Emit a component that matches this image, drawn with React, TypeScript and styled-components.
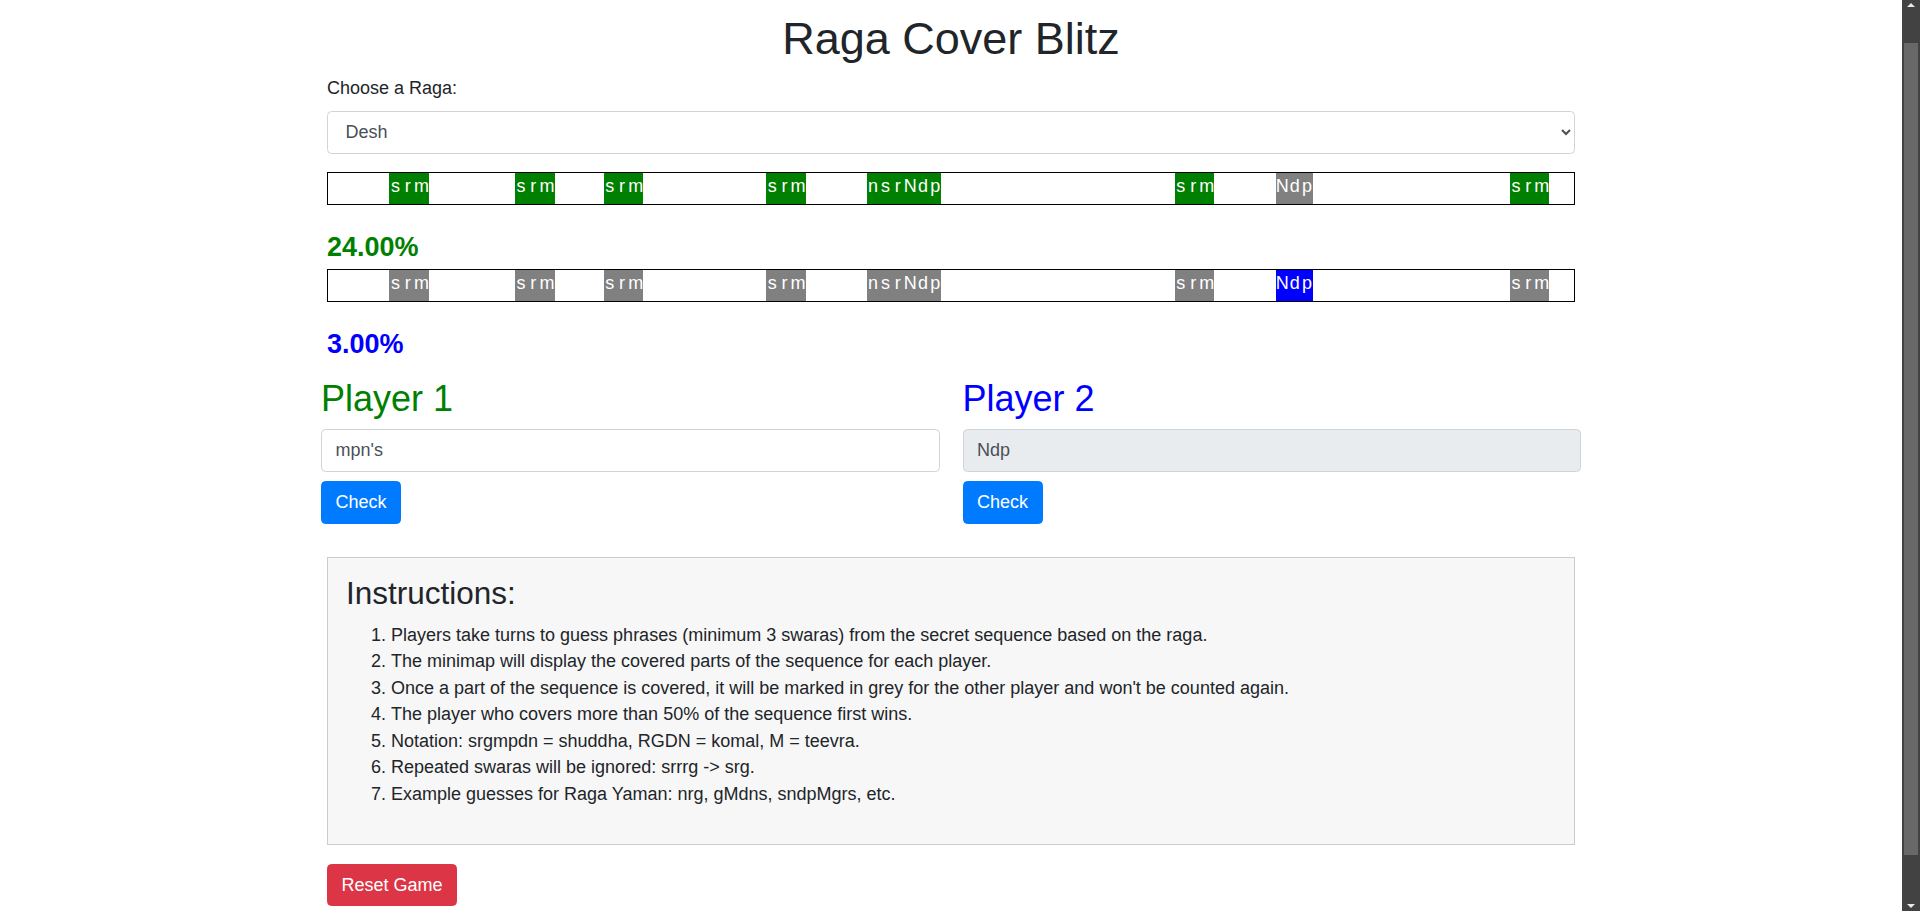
import {useMemo, useState} from 'react'
import styled, {createGlobalStyle} from 'styled-components'

// the secret sequence for Desh, one swara per cell (100 cells)
const SEQUENCE = [
  'gpdnd', 'srm', 'pgrgsnd', 'srm', 'gpdn', 'srm', 'pdnsrgrgsn', 'srm', 'pgrsn',
  'nsrNdp', 'gpdgrsnsrgpndpgrgsn', 'srm', 'pgdpn', 'Ndp', 'grgsnsrgpnsrgdps',
  'srm', 'pd',
].join('').split('')

type Range = [number, number]

const P1_COVERED: Range[] = [
  [5, 8], [15, 18], [22, 25], [35, 38], [43, 49], [68, 71], [95, 98],
]
const P2_COVERED: Range[] = [[76, 79]]

const PLAYER_COLORS = {1: 'green', 2: 'blue'} as const

type CellState = 'own' | 'other' | 'none'

const inRanges = (i: number, ranges: Range[]) =>
  ranges.some(([a, b]) => i >= a && i < b)

const coverage = (ranges: Range[]) =>
  (ranges.reduce((n, [a, b]) => n + b - a, 0) / SEQUENCE.length) * 100

const GlobalStyle = createGlobalStyle`
  body {
    margin: 0;
    background: #fff;
    color: #212529;
    font-family: "Liberation Sans", Arial, sans-serif;
    font-size: 18px;
    line-height: 1.5;
  }
  *, *::before, *::after {
    box-sizing: border-box;
  }
`

function App() {
  const [raga, setRaga] = useState('Desh')
  const [guess1, setGuess1] = useState("mpn's")

  const p1Percent = useMemo(() => coverage(P1_COVERED), [])
  const p2Percent = useMemo(() => coverage(P2_COVERED), [])

  const renderBar = (player: 1 | 2) => {
    const own = player === 1 ? P1_COVERED : P2_COVERED
    const other = player === 1 ? P2_COVERED : P1_COVERED
    return (
      <MiniMap>
        {SEQUENCE.map((s, i) => {
          const state: CellState = inRanges(i, own)
            ? 'own'
            : inRanges(i, other)
            ? 'other'
            : 'none'
          return (
            <Cell key={i} $state={state} $color={PLAYER_COLORS[player]}>
              {s}
            </Cell>
          )
        })}
      </MiniMap>
    )
  }

  return (
    <>
      <GlobalStyle />
      <Shell>
        <Page>
          <Container>
            <Title>Raga Cover Blitz</Title>
            <FormGroup>
              <Label htmlFor='raga'>Choose a Raga:</Label>
              <Select id='raga' value={raga} onChange={e => setRaga(e.target.value)}>
                <option>Yaman</option>
                <option>Desh</option>
                <option>Bhairav</option>
                <option>Bhoopali</option>
              </Select>
            </FormGroup>

            {renderBar(1)}
            <Percent $color={PLAYER_COLORS[1]}>{p1Percent.toFixed(2)}%</Percent>
            {renderBar(2)}
            <Percent $color={PLAYER_COLORS[2]}>{p2Percent.toFixed(2)}%</Percent>

            <PlayersRow>
              <PlayerCol>
                <PlayerName $color={PLAYER_COLORS[1]}>Player 1</PlayerName>
                <Input value={guess1} onChange={e => setGuess1(e.target.value)} />
                <Button $variant='primary'>Check</Button>
              </PlayerCol>
              <PlayerCol>
                <PlayerName $color={PLAYER_COLORS[2]}>Player 2</PlayerName>
                <Input value='Ndp' disabled readOnly />
                <Button $variant='primary'>Check</Button>
              </PlayerCol>
            </PlayersRow>

            <Instructions>
              <InstructionsTitle>Instructions:</InstructionsTitle>
              <Steps>
                <li>Players take turns to guess phrases (minimum 3 swaras) from the secret sequence based on the raga.</li>
                <li>The minimap will display the covered parts of the sequence for each player.</li>
                <li>Once a part of the sequence is covered, it will be marked in grey for the other player and won't be counted again.</li>
                <li>The player who covers more than 50% of the sequence first wins.</li>
                <li>Notation: srgmpdn = shuddha, RGDN = komal, M = teevra.</li>
                <li>Repeated swaras will be ignored: srrrg -&gt; srg.</li>
                <li>Example guesses for Raga Yaman: nrg, gMdns, sndpMgrs, etc.</li>
              </Steps>
            </Instructions>

            <ResetButton $variant='danger'>Reset Game</ResetButton>
          </Container>
        </Page>

        {/* window scrollbar as seen in the screenshot */}
        <ScrollBar aria-hidden>
          <ArrowButton>
            <Arrow $dir='up' />
          </ArrowButton>
          <Track>
            <Thumb />
          </Track>
          <ArrowButton $bottom>
            <Arrow $dir='down' />
          </ArrowButton>
        </ScrollBar>
      </Shell>
    </>
  )
}

const Shell = styled.div`
  display: flex;
  align-items: flex-start;
  min-height: 100vh;
`

const Page = styled.main`
  flex: 1;
  min-width: 0;
`

const Container = styled.div`
  width: 1282px;
  margin: 0 auto;
  padding: 12px 17px 70px;
`

const Title = styled.h1`
  margin: 0 0 9px;
  font-size: 45px;
  font-weight: 500;
  line-height: 1.2;
  text-align: center;
`

const FormGroup = styled.div`
  margin-bottom: 18px;
`

const Label = styled.label`
  display: inline-block;
  margin-bottom: 9px;
`

const fieldStyles = `
  display: block;
  width: 100%;
  height: 42.75px;
  padding: 6.75px 13.5px;
  font-family: inherit;
  font-size: 18px;
  line-height: 1.5;
  color: #495057;
  background-color: #fff;
  border: 1px solid #ced4da;
  border-radius: 4.5px;
  outline: none;
`

const Select = styled.select`
  ${fieldStyles}
`

const Input = styled.input`
  ${fieldStyles}
  margin-bottom: 9.5px;

  &:disabled {
    background-color: #e9ecef;
    opacity: 1;
  }
`

const MiniMap = styled.div`
  display: flex;
  height: 33px;
  border: 1px solid #000;
  margin-bottom: 26px;
`

// cells share the width equally but never get narrower than their letter
const Cell = styled.span<{$state: CellState; $color: string}>`
  flex: 1 1 0;
  white-space: nowrap;
  text-align: center;
  font-size: 18px;
  line-height: 27px;
  color: #fff;
  background: ${p =>
    p.$state === 'own' ? p.$color : p.$state === 'other' ? 'grey' : '#fff'};
`

const Percent = styled.div<{$color: string}>`
  margin-bottom: 5.5px;
  font-size: 27px;
  font-weight: 700;
  line-height: 1.2;
  color: ${p => p.$color};
`

const PlayersRow = styled.div`
  display: grid;
  grid-template-columns: 1fr 1fr;
  column-gap: 23px;
  margin: 17px -6px 0;
`

const PlayerCol = styled.div`
  display: flex;
  flex-direction: column;
  align-items: flex-start;
`

const PlayerName = styled.h2<{$color: string}>`
  margin: 0 0 9px;
  font-size: 36px;
  font-weight: 500;
  line-height: 1.2;
  color: ${p => p.$color};
`

const Button = styled.button<{$variant: 'primary' | 'danger'}>`
  display: inline-block;
  padding: 6.75px 13.5px;
  font-family: inherit;
  font-size: 18px;
  line-height: 1.5;
  color: #fff;
  border: 1px solid ${p => (p.$variant === 'primary' ? '#007bff' : '#dc3545')};
  border-radius: 4.5px;
  background-color: ${p => (p.$variant === 'primary' ? '#007bff' : '#dc3545')};
  cursor: pointer;
`

const ResetButton = styled(Button)`
  margin-top: 18.5px;
`

const Instructions = styled.div`
  margin-top: 33px;
  padding: 17px 18px 19px;
  background: #f7f7f7;
  border: 1px solid #ccc;
`

const InstructionsTitle = styled.h3`
  margin: 0 0 9px;
  font-size: 31.5px;
  font-weight: 500;
  line-height: 1.2;
`

const Steps = styled.ol`
  margin: 0 0 18px;
  padding-left: 45px;
  line-height: 26.5px;
`

const ScrollBar = styled.div`
  position: sticky;
  top: 0;
  flex: none;
  display: flex;
  flex-direction: column;
  width: 18px;
  height: 100vh;
  background: #424242;
`

const ArrowButton = styled.div<{$bottom?: boolean}>`
  display: flex;
  justify-content: center;
  align-items: ${p => (p.$bottom ? 'flex-end' : 'flex-start')};
  height: 17px;
  padding: 3px 0;
`

const Arrow = styled.span<{$dir: 'up' | 'down'}>`
  width: 0;
  height: 0;
  border-left: 4px solid transparent;
  border-right: 4px solid transparent;
  ${p =>
    p.$dir === 'up'
      ? 'border-bottom: 4px solid #e8e8e8;'
      : 'border-top: 4px solid #e8e8e8;'}
`

const Track = styled.div`
  flex: 1;
  display: flex;
  padding: 26px 2px 39px;
`

const Thumb = styled.div`
  flex: 1;
  background: #686868;
`

export default App
